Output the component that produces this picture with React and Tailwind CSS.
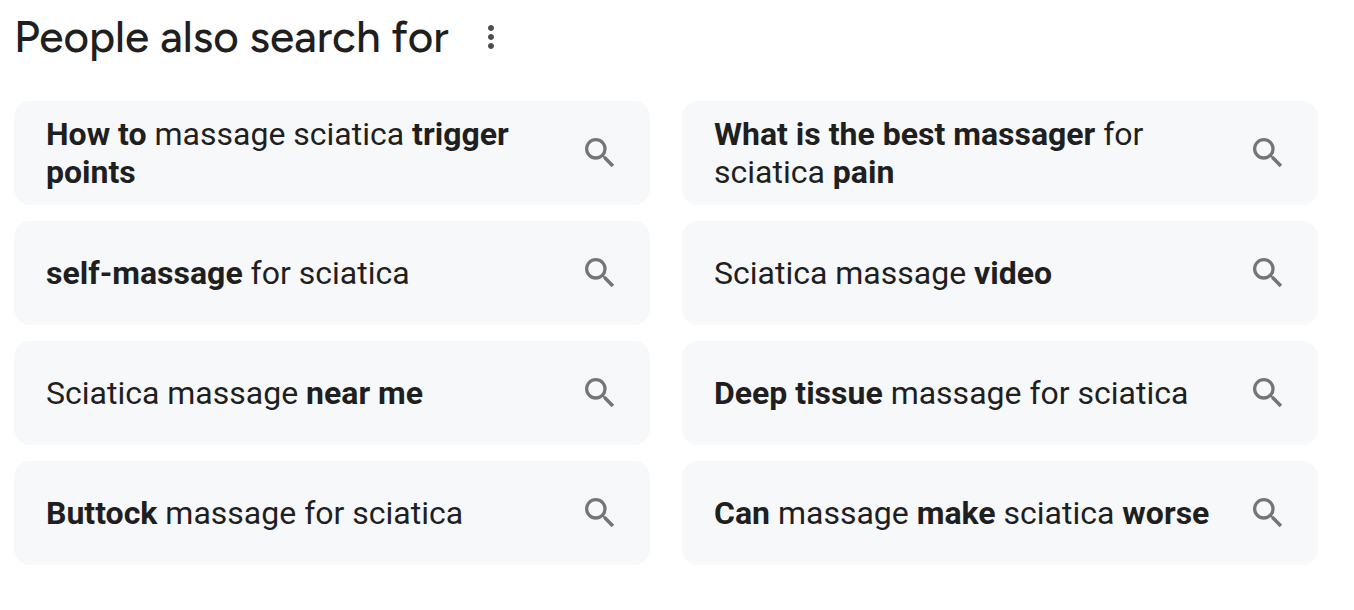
const searches = [
  [['How to', true], [' massage sciatica '], ['trigger points', true]],
  [['What is the best massager', true], [' for sciatica '], ['pain', true]],
  [['self-massage', true], [' for sciatica']],
  [['Sciatica massage '], ['video', true]],
  [['Sciatica massage '], ['near me', true]],
  [['Deep tissue', true], [' massage for sciatica']],
  [['Buttock', true], [' massage for sciatica']],
  [['Can', true], [' massage '], ['make', true], [' sciatica '], ['worse', true]],
];

function SearchIcon() {
  return (
    <svg viewBox="0 0 24 24" className="size-10 shrink-0 fill-[#757575]" aria-hidden="true">
      <path d="M15.5 14h-.79l-.28-.27A6.471 6.471 0 0 0 16 9.5 6.5 6.5 0 1 0 9.5 16c1.61 0 3.09-.59 4.23-1.57l.27.28v.79l5 4.99L20.49 19l-4.99-5zm-6 0C7.01 14 5 11.99 5 9.5S7.01 5 9.5 5 14 7.01 14 9.5 11.99 14 9.5 14z" />
    </svg>
  );
}

function MoreIcon() {
  return (
    <svg viewBox="0 0 24 24" className="size-9 fill-[#4d4d4f]" aria-hidden="true">
      <path d="M12 8c1.1 0 2-.9 2-2s-.9-2-2-2-2 .9-2 2 .9 2 2 2zm0 2c-1.1 0-2 .9-2 2s.9 2 2 2 2-.9 2-2-.9-2-2-2zm0 6c-1.1 0-2 .9-2 2s.9 2 2 2 2-.9 2-2-.9-2-2-2z" />
    </svg>
  );
}

export default function App() {
  return (
    <main className="bg-white pt-3 pr-9 pb-11 pl-3.5 font-['Roboto',sans-serif] text-[#1f1f1f]">
      <header className="flex items-center gap-6">
        <h1 className="font-['Figtree','Lato',sans-serif] text-[44px] leading-[50px] font-medium">People also search for</h1>
        <button type="button" aria-label="About this result">
          <MoreIcon />
        </button>
      </header>
      <nav aria-label="Related searches" className="mt-[39px] grid grid-cols-2 gap-x-8 gap-y-4">
        {searches.map((parts, i) => (
          <a
            key={i}
            href="#"
            className="flex min-h-26 items-center justify-between gap-8 rounded-2xl bg-[#f7f8fa] pr-[30px] pl-8 text-[32px] leading-[38px]"
          >
            <span>
              {parts.map(([text, strong], j) =>
                strong ? <b key={j} className="font-bold">{text}</b> : text
              )}
            </span>
            <SearchIcon />
          </a>
        ))}
      </nav>
    </main>
  );
}
